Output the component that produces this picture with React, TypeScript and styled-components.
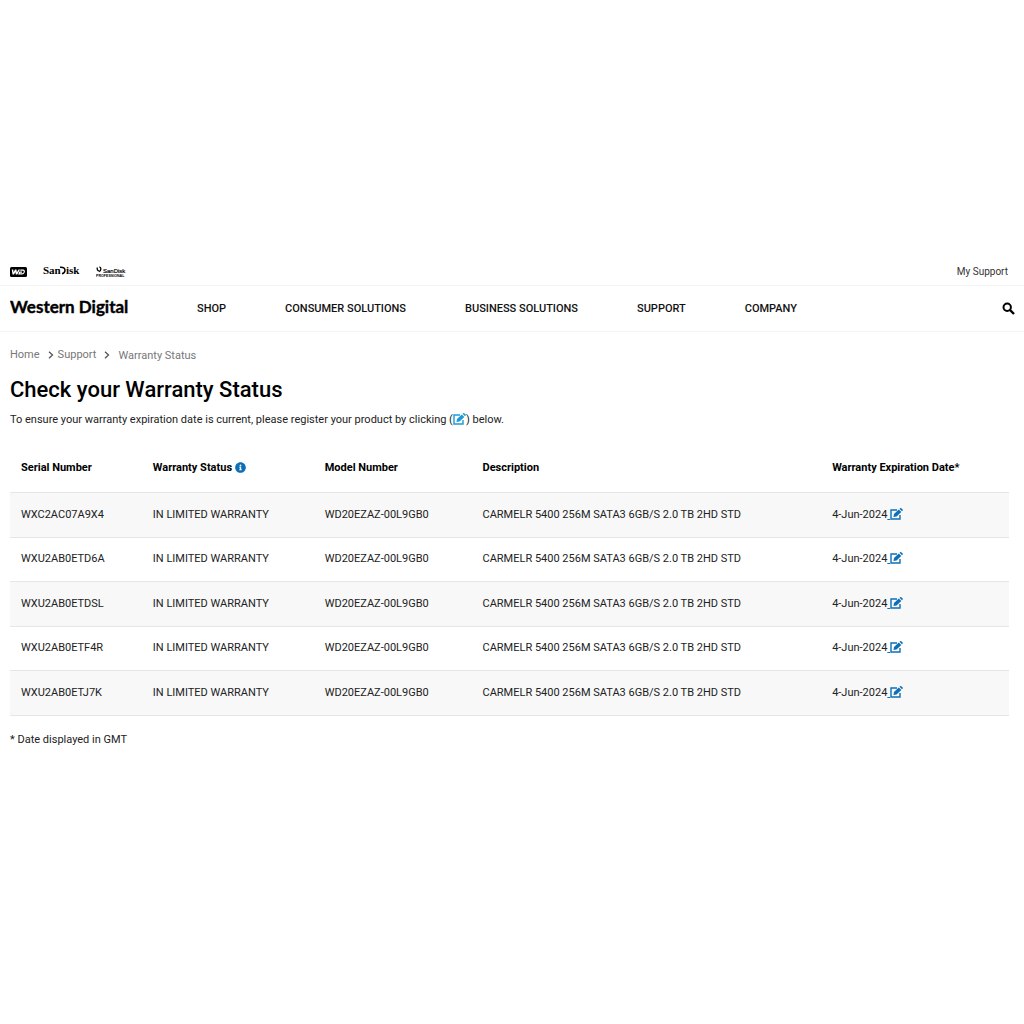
import React from "react";
import styled, { createGlobalStyle } from "styled-components";
import { FaInfoCircle } from "react-icons/fa";

const GlobalStyle = createGlobalStyle`
  * { box-sizing: border-box; }
  body {
    margin: 0;
    background: #fff;
    color: #222;
    font-family: Roboto, "Liberation Sans", sans-serif;
    font-size: 11px;
    line-height: 16px;
  }
  a { color: inherit; text-decoration: none; }
`;

const Page = styled.div`
  padding: 256px 0 32px;
`;

const BrandBar = styled.div`
  display: flex;
  align-items: center;
  justify-content: space-between;
  height: 30px;
  padding: 2px 16px 0 10px;
  border-bottom: 1px solid #f4f4f4;
`;

const Brands = styled.div`
  display: flex;
  align-items: center;
  gap: 16px;
`;

const BrandLink = styled.a`
  display: flex;
  color: #000;
`;

const TopLink = styled.a`
  font-size: 10px;
  color: #333;
`;

const NavBar = styled.header`
  display: flex;
  align-items: center;
  height: 46px;
  padding: 0 9px 0 10px;
  border-bottom: 1px solid #f4f4f4;
`;

const Logo = styled.a`
  display: flex;
  width: 187px;
  color: #000;
`;

const Nav = styled.nav`
  display: flex;
  flex: 1;
  gap: 59px;
`;

const NavLink = styled.a`
  font-weight: 500;
  color: #111;
`;

const IconButton = styled.button`
  display: flex;
  padding: 0;
  border: 0;
  background: none;
  color: #000;
`;

const Main = styled.main`
  padding: 14px 15px 0 10px;
`;

const Crumbs = styled.nav`
  display: flex;
  align-items: center;
  color: #777;
`;

const CrumbArrow = styled.svg`
  margin: 0 4px 0 8px;
`;

const CurrentCrumb = styled.span`
  padding: 2px 0 0 4px;
`;

const Title = styled.h1`
  margin: 10px 0 6px;
  font-size: 22px;
  line-height: 32px;
  font-weight: 500;
  color: #000;
`;

const Text = styled.p`
  margin: 0;
`;

const Table = styled.table`
  width: 100%;
  margin: 16px 0;
  table-layout: fixed;
  border-collapse: collapse;
`;

const Col = styled.col<{ $share?: number }>`
  width: ${(p) => (p.$share ? `${p.$share}%` : "auto")};
`;

const HeadCell = styled.th`
  height: 48px;
  padding: 0 11px;
  text-align: left;
  font-weight: 700;
  color: #000;
`;

const Row = styled.tr`
  height: 44px;
  border-top: 1px solid #e6e6e6;
  border-bottom: 1px solid #e6e6e6;
  &:nth-child(odd) {
    height: 45px;
    background: #f8f8f8;
  }
`;

const Cell = styled.td`
  padding: 0 11px;
  white-space: nowrap;
`;

const InfoIcon = styled(FaInfoCircle)`
  color: #0d6fb8;
  vertical-align: -2px;
`;

const EditLink = styled.a`
  color: #0d6fb8;
  text-decoration: underline;
  white-space: pre;
`;

const EditSvg = styled.svg<{ $light?: boolean }>`
  color: ${(p) => (p.$light ? "#1c9ad6" : "#0d6fb8")};
  vertical-align: -2px;
`;

const EditIcon = ({ light }: { light?: boolean }) => (
  <EditSvg $light={light} width="13" height="12" viewBox="0 0 26 24" aria-hidden="true">
    <path d="M14 4H2v18h18v-8" fill="none" stroke="currentColor" strokeWidth="2.8" />
    <path d="M7 18l1-6L17.600 2.800l5 5L13 17z" fill="currentColor" />
    <path d="M19 1.600L20.400.4c.6-.5 1.500-.5 2.100 0l2.800 2.600c.6.6.6 1.500 0 2.100L24 6.500z" fill="currentColor" />
  </EditSvg>
);

const WdMark = () => (
  <svg width="17" height="10" viewBox="0 0 34 20" role="img" aria-label="WD">
    <rect width="34" height="20" rx="3" fill="#000" />
    <path d="M3.500 5h3l.6 5.500L10 5h3l.8 5.500L17 5h3l-5.500 10h-3l-.7-5-2.800 5H5z" fill="#fff" />
    <path d="M20.500 6.200h6c3.500 0 2.500 7.600-2 7.600h-6.500l1.600-3.600h4.500" fill="none" stroke="#fff" strokeWidth="2.400" />
  </svg>
);

const SanDiskMark = () => (
  <svg width="37" height="16" viewBox="0 0 37 16" role="img" aria-label="SanDisk">
    <g fill="#000" fontFamily="'Liberation Serif', serif" fontWeight="700" fontSize="11">
      <text x="0" y="10">San</text>
      <text x="23" y="10">isk</text>
    </g>
    <path d="M17 3.300c3.400-.3 5 .8 5 3 0 1.900-1 3-3 3.500" fill="none" stroke="#000" strokeWidth="1.500" />
  </svg>
);

const SanDiskProMark = () => (
  <svg width="30" height="12" viewBox="0 0 30 12" role="img" aria-label="SanDisk Professional">
    <path d="M1.200 1.500v1.600c0 1 .6 1.500 1.600 2M3.400.9c2 .5 2 3.200-.2 4.800" fill="none" stroke="#000" strokeWidth="1.300" />
    <g fill="#000" fontFamily="'Liberation Sans', sans-serif">
      <text x="7" y="6.500" fontSize="6" stroke="#000" strokeWidth=".2">SanDisk</text>
      <text x="0" y="10.500" fontSize="3.600" fontWeight="700">PROFESSIONAL</text>
    </g>
  </svg>
);

const WesternDigitalMark = () => (
  <svg width="122" height="24" viewBox="0 0 122 24" role="img" aria-label="Western Digital">
    <text x="0" y="16" fill="#000" stroke="#000" strokeWidth=".4" fontFamily="Lato, sans-serif" fontWeight="700" fontSize="17">
      Western Digital
    </text>
  </svg>
);

const Arrow = () => (
  <CrumbArrow width="6" height="8" viewBox="0 0 6 8" aria-hidden="true">
    <path d="M1 .8L4.500 4 1 7.200" fill="none" stroke="#555" strokeWidth="1.300" />
  </CrumbArrow>
);

const navItems = ["SHOP", "CONSUMER SOLUTIONS", "BUSINESS SOLUTIONS", "SUPPORT", "COMPANY"];

const products = ["WXC2AC07A9X4", "WXU2AB0ETD6A", "WXU2AB0ETDSL", "WXU2AB0ETF4R", "WXU2AB0ETJ7K"].map(
  (serial) => ({
    serial,
    status: "IN LIMITED WARRANTY",
    model: "WD20EZAZ-00L9GB0",
    description: "CARMELR 5400 256M SATA3 6GB/S 2.0 TB 2HD STD",
    expires: "4-Jun-2024",
  })
);

export default function App() {
  return (
    <Page>
      <GlobalStyle />
      <BrandBar>
        <Brands>
          <BrandLink href="#wd"><WdMark /></BrandLink>
          <BrandLink href="#sandisk"><SanDiskMark /></BrandLink>
          <BrandLink href="#sandisk-professional"><SanDiskProMark /></BrandLink>
        </Brands>
        <TopLink href="#my-support">My Support</TopLink>
      </BrandBar>
      <NavBar>
        <Logo href="#home"><WesternDigitalMark /></Logo>
        <Nav aria-label="Main">
          {navItems.map((item) => (
            <NavLink key={item} href="#menu">{item}</NavLink>
          ))}
        </Nav>
        <IconButton type="button" aria-label="Search">
          <svg width="13" height="13" viewBox="0 0 13 13" aria-hidden="true">
            <circle cx="5.200" cy="5.200" r="3.700" fill="none" stroke="currentColor" strokeWidth="2" />
            <path d="M8 8l4 4" stroke="currentColor" strokeWidth="2.400" />
          </svg>
        </IconButton>
      </NavBar>
      <Main>
        <Crumbs aria-label="Breadcrumb">
          <a href="#home">Home</a>
          <Arrow />
          <a href="#support">Support</a>
          <Arrow />
          <CurrentCrumb>Warranty Status</CurrentCrumb>
        </Crumbs>
        <Title>Check your Warranty Status</Title>
        <Text>
          To ensure your warranty expiration date is current, please register your product by clicking (
          <EditIcon light />) below.
        </Text>
        <Table>
          <colgroup>
            <Col $share={13.2} />
            <Col $share={17.2} />
            <Col $share={15.8} />
            <Col $share={35} />
            <Col />
          </colgroup>
          <thead>
            <tr>
              <HeadCell scope="col">Serial Number</HeadCell>
              <HeadCell scope="col">Warranty Status <InfoIcon size={11} /></HeadCell>
              <HeadCell scope="col">Model Number</HeadCell>
              <HeadCell scope="col">Description</HeadCell>
              <HeadCell scope="col">Warranty Expiration Date*</HeadCell>
            </tr>
          </thead>
          <tbody>
            {products.map((p) => (
              <Row key={p.serial}>
                <Cell>{p.serial}</Cell>
                <Cell>{p.status}</Cell>
                <Cell>{p.model}</Cell>
                <Cell>{p.description}</Cell>
                <Cell>
                  {p.expires}
                  <EditLink href="#register" aria-label={`Register ${p.serial}`}> <EditIcon /></EditLink>
                </Cell>
              </Row>
            ))}
          </tbody>
        </Table>
        <Text>* Date displayed in GMT</Text>
      </Main>
    </Page>
  );
}
